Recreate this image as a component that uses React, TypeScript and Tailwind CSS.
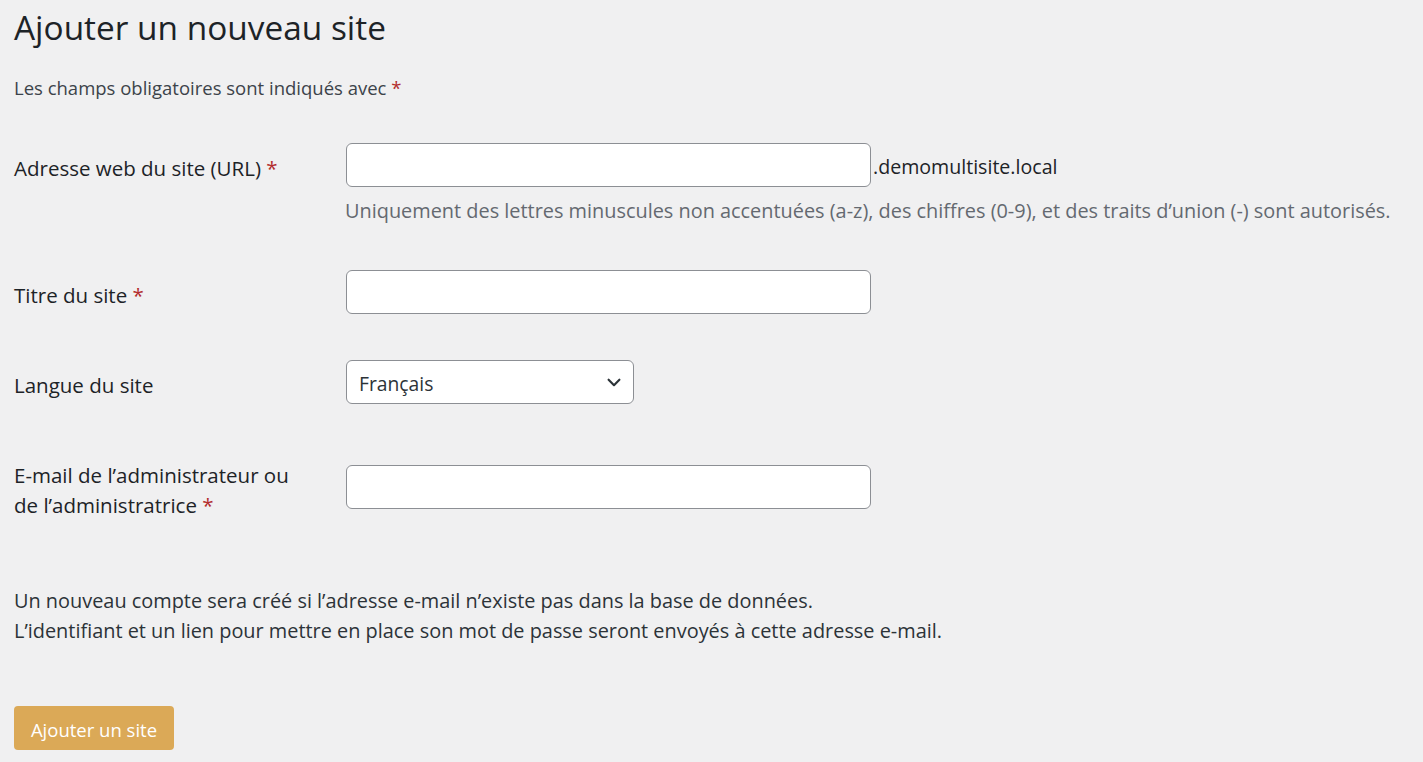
// App.tsx
// WordPress multisite "Ajouter un nouveau site" form

const font = { fontFamily: '"Open Sans", "Noto Sans", sans-serif' };

const Req = () => <span className="text-[#b32d2e]"> *</span>;

const TextInput = ({ className = 'w-[525px]' }: { className?: string }) => (
  <input
    type="text"
    className={`h-[44px] ${className} bg-white border border-[#8c8f94] rounded-[6px] px-3 outline-none`}
  />
);

const Chevron = () => (
  <svg width="18" height="18" viewBox="0 0 20 20" fill="none" stroke="#2c3338" strokeWidth="2.4" strokeLinecap="round" strokeLinejoin="round">
    <path d="M4 7.5 L10 13.5 L16 7.5" />
  </svg>
);

export default function App() {
  return (
    <div className="min-h-screen bg-[#f0f0f1] text-[#1d2327] px-[14px]" style={font}>
      {/* Title */}
      <h1 className="pt-[4px] text-[33.4px] leading-[46px] font-normal">Ajouter un nouveau site</h1>

      <p className="mt-[23px] text-[18.5px] leading-[30px] text-[#3c434a]">
        Les champs obligatoires sont indiqués avec<Req />
      </p>

      {/* Form rows */}
      <div className="mt-[40px] flex flex-col">
        <div className="flex items-start">
          <label className="w-[332px] shrink-0 pt-[10px] text-[20.5px] leading-[30px]">
            Adresse web du site (URL)<Req />
          </label>
          <div className="flex flex-col">
            <div className="flex items-center">
              <TextInput />
              <span className="ml-[2px] pt-[4px] text-[19.6px] leading-[30px]">.demomultisite.local</span>
            </div>
            <p className="mt-[9px] -ml-px text-[19.9px] leading-[30px] text-[#646970]">
              Uniquement des lettres minuscules non accentuées (a-z), des chiffres (0-9), et des traits d’union (-) sont autorisés.
            </p>
          </div>
        </div>

        <div className="mt-[44px] flex items-start">
          <label className="w-[332px] shrink-0 pt-[10px] text-[20.5px] leading-[30px]">
            Titre du site<Req />
          </label>
          <TextInput />
        </div>

        <div className="mt-[46px] flex items-start">
          <label className="w-[332px] shrink-0 pt-[10px] text-[20.5px] leading-[30px]">Langue du site</label>
          <div className="h-[44px] w-[288px] bg-white border border-[#8c8f94] rounded-[6px] pl-[12px] pr-[10px] flex items-center justify-between">
            <span className="pt-[4px] text-[19.3px] text-[#2c3338]">Français</span>
            <Chevron />
          </div>
        </div>

        <div className="mt-[56px] flex items-start">
          <label className="w-[332px] shrink-0 text-[20.5px] leading-[30px]">
            E-mail de l’administrateur ou
            <br />
            de l’administratrice<Req />
          </label>
          <div className="mt-[5px]">
            <TextInput />
          </div>
        </div>
      </div>

      <p className="mt-[66px] text-[19.9px] leading-[30px] text-[#2c3338]">
        Un nouveau compte sera créé si l’adresse e-mail n’existe pas dans la base de données.
        <br />
        L’identifiant et un lien pour mettre en place son mot de passe seront envoyés à cette adresse e-mail.
      </p>

      <button
        type="button"
        className="mt-[60px] h-[44px] w-[160px] rounded-[4px] bg-[#dba957] pt-[3px] text-white text-[18.5px]"
      >
        Ajouter un site
      </button>
    </div>
  );
}
